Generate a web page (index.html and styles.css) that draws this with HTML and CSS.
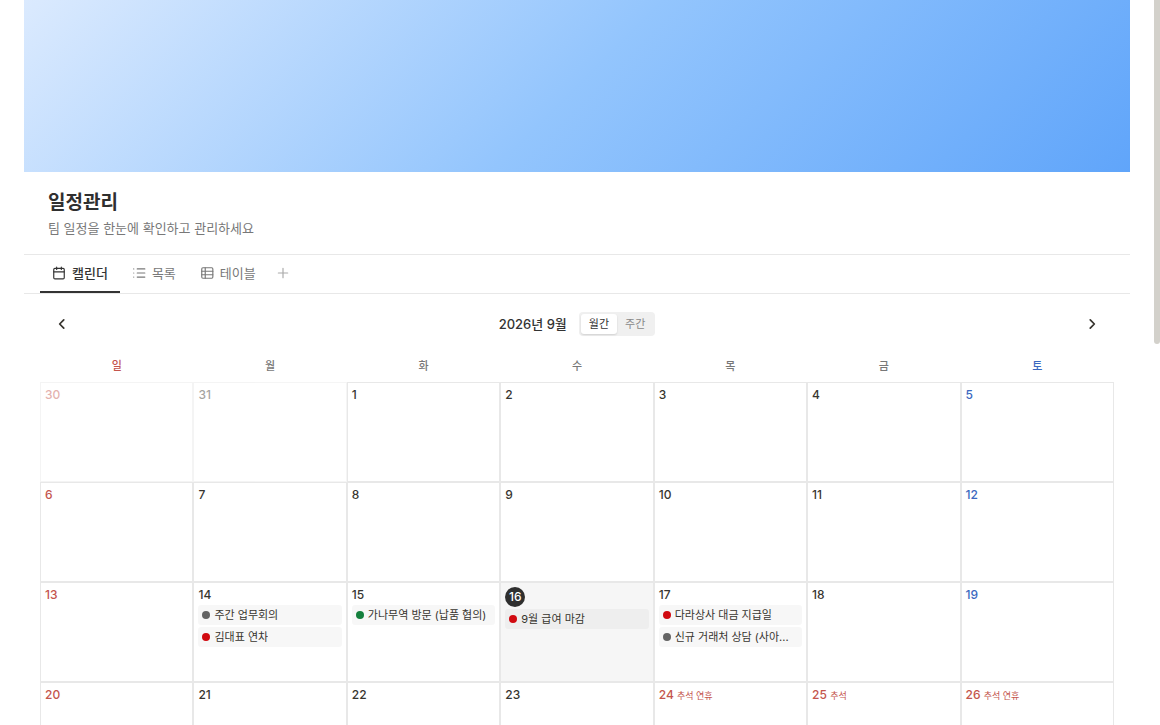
FILE: index.html
```
<!DOCTYPE html>
<html lang="ko">
<head>
  <meta charset="UTF-8" />
  <meta name="viewport" content="width=device-width, initial-scale=1.0"/>
  <title>일정관리</title>
  <link rel="stylesheet" href="styles.css">
</head>
<body>
  <main class="page">
    <div class="cover"></div>

    <header class="page-header">
      <h1>일정관리</h1>
      <p>팀 일정을 한눈에 확인하고 관리하세요</p>
    </header>

    <!-- View tabs -->
    <nav class="tabs">
      <button type="button" class="tab active">
        <svg class="icon" viewBox="0 0 24 24"><path d="M8 2v4M16 2v4M3 10h18"/><rect x="3" y="4" width="18" height="18" rx="2"/></svg>
        캘린더
      </button>
      <button type="button" class="tab">
        <svg class="icon" viewBox="0 0 24 24"><path d="M9 5h13M9 12h13M9 19h13M3 5h.01M3 12h.01M3 19h.01"/></svg>
        목록
      </button>
      <button type="button" class="tab">
        <svg class="icon" viewBox="0 0 24 24"><rect x="3" y="3" width="19" height="18" rx="2"/><path d="M3 9h19M3 15h19M9 3v18"/></svg>
        테이블
      </button>
      <button type="button" class="tab tab-add" aria-label="보기 추가">
        <svg class="icon" viewBox="0 0 24 24"><path d="M4 12h16M12 4v16"/></svg>
      </button>
    </nav>

    <section class="calendar">
      <div class="toolbar">
        <button type="button" class="nav-button" aria-label="이전 달">
          <svg class="chevron" viewBox="0 0 24 24"><path d="M15 19l-7-7 7-7"/></svg>
        </button>
        <div class="period">
          <h2>2026년 9월</h2>
          <div class="toggle">
            <button type="button" class="selected">월간</button>
            <button type="button">주간</button>
          </div>
        </div>
        <button type="button" class="nav-button" aria-label="다음 달">
          <svg class="chevron" viewBox="0 0 24 24"><path d="M9 5l7 7-7 7"/></svg>
        </button>
      </div>

      <table class="month">
        <thead>
          <tr>
            <th class="sun">일</th>
            <th>월</th>
            <th>화</th>
            <th>수</th>
            <th>목</th>
            <th>금</th>
            <th class="sat">토</th>
          </tr>
        </thead>
        <tbody>
          <tr>
            <td class="outside sun"><div class="date">30</div></td>
            <td class="outside"><div class="date">31</div></td>
            <td><div class="date">1</div></td>
            <td><div class="date">2</div></td>
            <td><div class="date">3</div></td>
            <td><div class="date">4</div></td>
            <td class="sat"><div class="date">5</div></td>
          </tr>
          <tr>
            <td class="sun"><div class="date">6</div></td>
            <td><div class="date">7</div></td>
            <td><div class="date">8</div></td>
            <td><div class="date">9</div></td>
            <td><div class="date">10</div></td>
            <td><div class="date">11</div></td>
            <td class="sat"><div class="date">12</div></td>
          </tr>
          <tr>
            <td class="sun"><div class="date">13</div></td>
            <td>
              <div class="date">14</div>
              <div class="event"><span class="dot gray"></span><span class="event-title">주간 업무회의</span></div>
              <div class="event"><span class="dot red"></span><span class="event-title">김대표 연차</span></div>
            </td>
            <td>
              <div class="date">15</div>
              <div class="event"><span class="dot green"></span><span class="event-title">가나무역 방문 (납품 협의)</span></div>
            </td>
            <td class="today">
              <div class="date">16</div>
              <div class="event"><span class="dot red"></span><span class="event-title">9월 급여 마감</span></div>
            </td>
            <td>
              <div class="date">17</div>
              <div class="event"><span class="dot red"></span><span class="event-title">다라상사 대금 지급일</span></div>
              <div class="event"><span class="dot gray"></span><span class="event-title">신규 거래처 상담 (사아...</span></div>
            </td>
            <td><div class="date">18</div></td>
            <td class="sat"><div class="date">19</div></td>
          </tr>
          <tr>
            <td class="sun"><div class="date">20</div></td>
            <td><div class="date">21</div></td>
            <td><div class="date">22</div></td>
            <td><div class="date">23</div></td>
            <td class="holiday"><div class="date">24 <small>추석 연휴</small></div></td>
            <td class="holiday"><div class="date">25 <small>추석</small></div></td>
            <td class="holiday"><div class="date">26 <small>추석 연휴</small></div></td>
          </tr>
        </tbody>
      </table>
    </section>
  </main>
  <div class="scroll-rail"><div class="scroll-thumb"></div></div>
</body>
</html>
```
FILE: styles.css
```
* {
  box-sizing: border-box;
}

body {
  margin: 0;
  height: 100vh;
  display: flex;
  overflow: hidden;
  font-family: Inter, "Noto Sans CJK KR", sans-serif;
  color: #37352f;
  background: #fff;
}

h1, h2, p {
  margin: 0;
}

button {
  font-family: inherit;
  color: inherit;
  background: none;
  border: none;
  padding: 0;
  cursor: pointer;
}

.page {
  flex: 1;
  min-width: 0;
  padding: 0 24px;
  overflow-y: auto;
  scrollbar-width: none;
}

.cover {
  height: 172px;
  background: linear-gradient(135deg, #dbeafe 0%, #93c5fd 50%, #60a5fa 100%);
}

.page-header {
  padding: 16px 24px;
}

.page-header h1 {
  font-size: 19px;
  line-height: 30px;
  font-weight: 700;
  color: #2f2f2f;
}

.page-header p {
  font-size: 13px;
  line-height: 20px;
  color: #787878;
}

/* Tabs */
.tabs {
  display: flex;
  padding: 0 16px;
  border-top: 1px solid #e8e8e8;
  border-bottom: 1px solid #e8e8e8;
}

.tab {
  display: flex;
  align-items: center;
  gap: 6px;
  padding: 8px 12px;
  border-bottom: 2px solid transparent;
  font-size: 13px;
  line-height: 20px;
  color: #787878;
}

.tab.active {
  color: #333;
  font-weight: 500;
  border-bottom-color: #333;
}

.tab-add {
  padding: 8px;
  color: #aaa;
}

.icon {
  width: 14px;
  height: 14px;
}

.icon, .chevron {
  fill: none;
  stroke: currentColor;
  stroke-width: 2;
  stroke-linecap: round;
  stroke-linejoin: round;
}

/* Calendar */
.calendar {
  padding: 16px;
}

.toolbar {
  display: flex;
  align-items: center;
  justify-content: space-between;
  padding: 0 8px;
  margin-bottom: 12px;
}

.nav-button {
  display: flex;
  align-items: center;
  justify-content: center;
  width: 28px;
  height: 28px;
}

.chevron {
  width: 14px;
  height: 14px;
  stroke-width: 3;
}

.period {
  display: flex;
  align-items: center;
  gap: 12px;
}

.period h2 {
  font-size: 13px;
  line-height: 20px;
  font-weight: 500;
  color: #333;
}

.toggle {
  display: flex;
  padding: 2px;
  border-radius: 4px;
  background: #f0f0f0;
}

.toggle button {
  padding: 0 8px;
  border-radius: 3px;
  font-size: 11px;
  line-height: 20px;
  color: #888;
}

.toggle .selected {
  background: #fff;
  color: #333;
  box-shadow: 0 1px 2px #00000022;
}

.month {
  width: 100%;
  table-layout: fixed;
  border-spacing: 0;
}

.month th {
  height: 32px;
  padding: 0;
  font-size: 11px;
  line-height: 16px;
  font-weight: 500;
  color: #787878;
}

.month td {
  height: 100px;
  padding: 4px;
  vertical-align: top;
  border: 1px solid #e8e8e8;
}

.month .sun, .month .holiday {
  color: #c4554d;
}

.month .sat {
  color: #3b68c0;
}

.month .outside {
  opacity: 0.45;
}

.date {
  font-size: 12px;
  line-height: 16px;
  font-weight: 500;
}

.date small {
  font-size: 9px;
  font-weight: 400;
}

.today {
  background: #f6f6f6;
}

.today .date {
  width: 20px;
  border-radius: 50%;
  line-height: 20px;
  text-align: center;
  color: #fff;
  background: #2f2f2f;
}

.event {
  display: flex;
  align-items: center;
  gap: 4px;
  margin-top: 2px;
  padding: 0 4px;
  border-radius: 3px;
  font-size: 11px;
  line-height: 20px;
  color: #37352f;
  background: #00000008;
}

.event-title {
  min-width: 0;
  height: 20px;
  overflow: hidden;
  white-space: nowrap;
  text-overflow: ellipsis;
}

.dot {
  flex: none;
  width: 8px;
  height: 8px;
  border-radius: 50%;
}

.gray {
  background: #646464;
}

.red {
  background: #d10a10;
}

.green {
  background: #15803d;
}

.scroll-rail {
  width: 6px;
}

.scroll-thumb {
  height: 344px;
  border-radius: 0 0 3px 3px;
  background: #d3d1cb;
}
```
